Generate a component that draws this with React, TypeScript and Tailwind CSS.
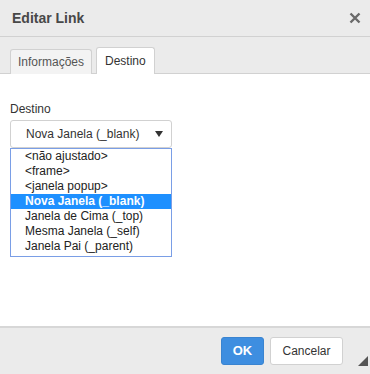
export default function App() {
  const options = [
    "<não ajustado>",
    "<frame>",
    "<janela popup>",
    "Nova Janela (_blank)",
    "Janela de Cima (_top)",
    "Mesma Janela (_self)",
    "Janela Pai (_parent)",
  ];

  return (
    <div className="w-[370px] h-[374px] flex flex-col bg-white text-[#333] font-['Liberation_Sans',Arial,sans-serif] overflow-hidden">
      {/* Title bar */}
      <div className="h-[37px] shrink-0 flex items-center justify-between pl-[12px] pr-[9px] bg-[#ebebeb] border-b border-[#d1d1d1]">
        <span className="text-[14px] font-bold text-[#484848]">Editar Link</span>
        <svg width="12" height="12" viewBox="0 0 12 12" className="text-[#6a6a6a]">
          <path d="M1.5 1.5 L10.5 10.5 M10.5 1.5 L1.5 10.5" stroke="currentColor" strokeWidth="2.4" />
        </svg>
      </div>

      {/* Tabs */}
      <div className="h-[37px] shrink-0 bg-[#ebebeb] flex items-end gap-[4px] pl-[10px] border-b border-[#d1d1d1]">
        <div className="h-[25px] px-[7px] flex items-center text-[12px] text-[#555] bg-[#f3f3f3] border border-b-0 border-[#d1d1d1] rounded-t-[3px] -mb-px">
          Informações
        </div>
        <div className="h-[27px] px-[8px] flex items-center text-[12px] text-[#333] bg-white border border-b-0 border-[#d1d1d1] rounded-t-[3px] -mb-px">
          Destino
        </div>
      </div>

      {/* Body */}
      <div className="flex-1 pl-[10px] pt-[26px]">
        <div className="text-[12px] text-[#333] mb-[2px]">Destino</div>
        <div className="w-[162px] h-[28px] flex items-center justify-between pl-[15px] pr-[8px] border border-[#d1d1d1] rounded-[3px] text-[12px] text-[#333] bg-white">
          <span>Nova Janela (_blank)</span>
          <svg width="8" height="6" viewBox="0 0 8 6">
            <path d="M0 0 H8 L4 6 Z" fill="#333" />
          </svg>
        </div>
        <div className="w-[162px] border border-[#7a9ee6] bg-white pb-[2px]">
          {options.map((o, i) => (
            <div
              key={o}
              className={
                i === 3
                  ? "h-[15px] leading-[15px] pl-[14px] text-[12px] bg-[#1e90ff] text-white font-bold"
                  : "h-[15px] leading-[15px] pl-[14px] text-[12px] text-[#222]"
              }
            >
              {o}
            </div>
          ))}
        </div>
      </div>

      {/* Footer */}
      <div className="h-[48px] shrink-0 relative bg-[#ebebeb] border-t-2 border-[#d7d7d7] flex items-center justify-end gap-[6px] pr-[27px]">
        <button className="h-[28px] w-[43px] rounded-[3px] bg-[#3e8ee0] border border-[#3a84d0] text-white text-[13px] font-bold">
          OK
        </button>
        <button className="h-[28px] w-[73px] rounded-[3px] bg-white border border-[#d1d1d1] text-[#333] text-[12px]">
          Cancelar
        </button>
        <svg width="10" height="10" viewBox="0 0 10 10" className="absolute right-[2px] bottom-[8px]">
          <path d="M10 0 V10 H0 Z" fill="#555" />
        </svg>
      </div>
    </div>
  );
}
